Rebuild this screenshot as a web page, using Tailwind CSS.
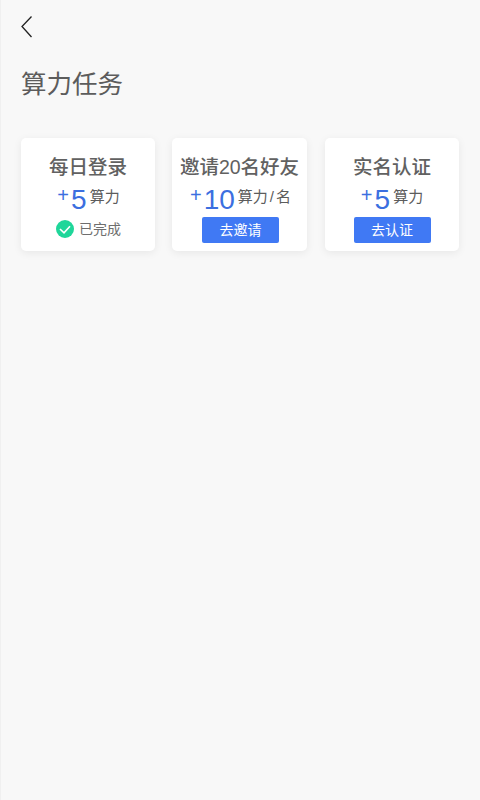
<!DOCTYPE html>
<html lang="zh-CN">
<head>
  <meta charset="UTF-8">
  <meta name="viewport" content="width=device-width, initial-scale=1.0">
  <title>算力任务</title>
  <script src="https://cdn.jsdelivr.net/npm/@tailwindcss/browser@4"></script>
</head>
<body class="bg-[#f8f8f8] text-[#5c5c5c] font-['Liberation_Sans','Noto_Sans_CJK_SC',sans-serif]">
  <div class="w-[480px] h-[800px] overflow-hidden border-l border-[#f0f0f0] pl-[20px] pr-[21px]">
    <!-- back -->
    <div class="pt-[16px] h-[37px]">
      <svg width="12" height="22" viewBox="0 0 12 22" fill="none" stroke="#222" stroke-width="1.3">
        <path d="M10.5 0.5 L1 10.5 L10.5 21" />
      </svg>
    </div>

    <h1 class="mt-[29px] h-[36px] leading-[36px] text-[25.5px] font-normal">算力任务</h1>

    <!-- tasks -->
    <div class="mt-[36px] flex">
      <div class="w-[134px] mr-[17px] h-[113px] bg-white rounded-[5px] shadow-[0_2px_8px_rgba(0,0,0,0.07)] flex flex-col items-center pt-[15px]">
        <div class="text-[19.5px] leading-[28px] font-medium text-[#616161]">每日登录</div>
        <div class="flex items-start h-[34px] mt-[2px]">
          <span class="text-[20px] leading-[20px] mt-[2px] text-[#3b6fe0] ml-[1px]">+</span>
          <span class="text-[28px] leading-[34px] text-[#3b6fe0] ml-[2px]">5</span>
          <span class="text-[15px] leading-[24px] ml-[3px] mt-[2px]">算力</span>
        </div>
        <div class="flex items-center gap-[5px] -mt-[1px] h-[26px]">
          <svg class="ml-[1px]" width="18" height="18" viewBox="0 0 18 18">
            <circle cx="9" cy="9" r="9" fill="#1fd69a" />
            <path d="M4 9 L8 12.8 L14 6.2" fill="none" stroke="#fff" stroke-width="1.6" />
          </svg>
          <span class="text-[14px] text-[#6e6e6e]">已完成</span>
        </div>
      </div>

      <div class="w-[135px] mr-[18px] h-[113px] bg-white rounded-[5px] shadow-[0_2px_8px_rgba(0,0,0,0.07)] flex flex-col items-center pt-[15px]">
        <div class="text-[19.5px] leading-[28px] font-medium text-[#616161] whitespace-nowrap">邀请20名好友</div>
        <div class="flex items-start h-[34px] mt-[2px] ml-[2px]">
          <span class="text-[20px] leading-[20px] mt-[2px] text-[#3b6fe0]">+</span>
          <span class="text-[28px] leading-[34px] text-[#3b6fe0] ml-[2px]">10</span>
          <span class="text-[15px] leading-[24px] ml-[3px] mt-[2px] whitespace-nowrap">算力<span class="mx-[2px]">/</span>名</span>
        </div>
        <button class="w-[77px] h-[26px] ml-[2px] bg-[#4079f4] text-white text-[14px] rounded-[2px]">去邀请</button>
      </div>

      <div class="w-[134px] h-[113px] bg-white rounded-[5px] shadow-[0_2px_8px_rgba(0,0,0,0.07)] flex flex-col items-center pt-[15px]">
        <div class="text-[19.5px] leading-[28px] font-medium text-[#616161]">实名认证</div>
        <div class="flex items-start h-[34px] mt-[2px]">
          <span class="text-[20px] leading-[20px] mt-[2px] text-[#3b6fe0]">+</span>
          <span class="text-[28px] leading-[34px] text-[#3b6fe0] ml-[2px]">5</span>
          <span class="text-[15px] leading-[24px] ml-[3px] mt-[2px]">算力</span>
        </div>
        <button class="w-[77px] h-[26px] bg-[#4079f4] text-white text-[14px] rounded-[2px]">去认证</button>
      </div>
    </div>
  </div>
</body>
</html>
